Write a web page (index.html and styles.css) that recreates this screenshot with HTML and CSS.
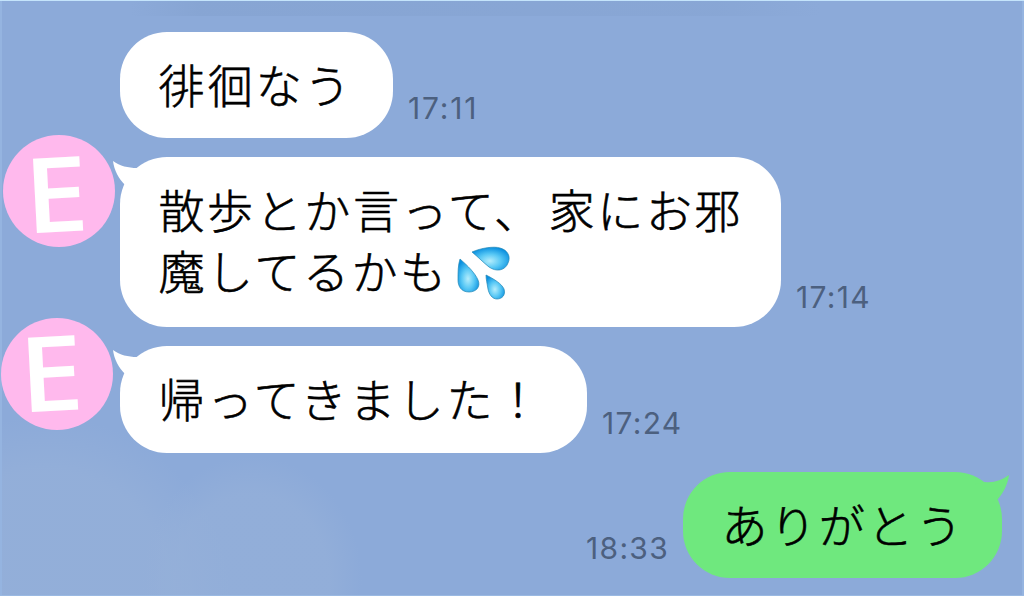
FILE: index.html
```html
<!DOCTYPE html>
<html lang="ja">
<head>
<meta charset="UTF-8">
<meta name="viewport" content="width=device-width, initial-scale=1.0">
<title>トーク</title>
<link rel="stylesheet" href="styles.css">
</head>
<body>
<div class="chat">
  <div class="row">
    <div class="avatar-col"></div>
    <div class="bubble">徘徊なう</div>
    <span class="time narrow">17:11</span>
  </div>

  <div class="row">
    <div class="avatar-col"><div class="avatar"><span>E</span></div></div>
    <div class="bubble long">
      <svg class="tail" width="34" height="32" viewBox="0 0 34 32"><path d="M0 3C7 8 15 10 24 10L34 12L20 32L12 27C6 21 1 12 0 3Z" fill="#fff"/></svg>
      散歩とか言って<span class="comma">、</span>家にお邪<br>魔してるかも<svg class="sweat" width="56" height="54" viewBox="0 0 56 54">
        <defs>
          <radialGradient id="drop" cx="48%" cy="60%" r="60%">
            <stop offset="0" stop-color="#b4edfc"/>
            <stop offset=".5" stop-color="#58c8f5"/>
            <stop offset="1" stop-color="#098fdf"/>
          </radialGradient>
        </defs>
        <g fill="url(#drop)" stroke="#2187b5" stroke-width=".7">
          <path d="M16 6C25 2 38 0 44 2C52 4 55 11 52 17C49 25 40 26 33 21C28 17 22 11 16 6Z"/>
          <path d="M4 13C12 20 19 27 22 34C25 41 20 46 13 46C5 46 2 40 2 34C2 26 2 19 4 13Z"/>
          <path d="M30 29C38 33 46 38 48 43C50 49 46 53 41 53C36 53 33 48 32 43C31 37 30 33 30 29Z"/>
        </g>
      </svg>
    </div>
    <span class="time">17:14</span>
  </div>

  <div class="row">
    <div class="avatar-col"><div class="avatar second"><span>E</span></div></div>
    <div class="bubble medium">
      <svg class="tail" width="34" height="32" viewBox="0 0 34 32"><path d="M0 3C7 8 15 10 24 10L34 12L20 32L12 27C6 21 1 12 0 3Z" fill="#fff"/></svg>
      帰ってきました！
    </div>
    <span class="time">17:24</span>
  </div>

  <div class="row mine">
    <span class="time">18:33</span>
    <div class="bubble">
      <svg class="tail" width="34" height="32" viewBox="0 0 34 32"><path d="M34 3C27 8 19 11 10 10L0 12L14 32L23 27C29 20 33 11 34 3Z" fill="#6fe87e"/></svg>
      ありがとう
    </div>
  </div>
</div>
</body>
</html>
```
FILE: styles.css
```css
* {
  box-sizing: border-box;
}

body {
  margin: 0;
  overflow: hidden;
}

.chat {
  height: 596px;
  padding-top: 31px;
  display: flex;
  flex-direction: column;
  gap: 19px;
  border-top: 1px solid #c4e4fb;
  border-bottom: 1px solid #9ab9e2;
  background:
    linear-gradient(#95b4e0, #95b4e0) left / 2px 100% no-repeat,
    linear-gradient(#95b4e0, #95b4e0) right / 2px 100% no-repeat,
    linear-gradient(90deg, rgba(133, 163, 209, 0), rgba(133, 163, 209, .7) 10%, rgba(133, 163, 209, .5) 85%, rgba(133, 163, 209, 0)) 130px 0 / 690px 15px no-repeat,
    radial-gradient(ellipse 110px 125px at 252px 580px, rgba(149, 176, 217, .65) 70%, rgba(149, 176, 217, 0)),
    radial-gradient(ellipse 185px 185px at 45px 600px, rgba(149, 176, 217, .75) 70%, rgba(149, 176, 217, 0)),
    #8caad9;
}

.row {
  display: flex;
  align-items: flex-end;
}

.avatar-col {
  width: 120px;
  align-self: flex-start;
}

.avatar {
  width: 112px;
  height: 112px;
  margin: -22px 0 -90px 3px;
  border-radius: 50%;
  background: #ffb9ed;
  display: flex;
  align-items: center;
  justify-content: center;
}

.avatar.second {
  margin: -28px 0 -84px 1px;
}

.avatar span {
  font: 600 104px/112px "Open Sans", sans-serif;
  color: #fff;
  transform: translate(-3px, 1px) rotate(-3deg) scaleX(1.1);
}

.avatar.second span {
  transform: translate(-6px, -3px) rotate(-3deg) scaleX(1.1);
}

.bubble {
  position: relative;
  width: 273px;
  height: 106.3px;
  padding: 21px 0 0 38.5px;
  border-radius: 47px;
  background: #fff;
  color: #000;
  font-family: "Noto Sans CJK JP", sans-serif;
  font-weight: 300;
  font-size: 46px;
  line-height: 61px;
  letter-spacing: 2.6px;
  white-space: nowrap;
  -webkit-text-stroke: .6px #000;
}

.long {
  width: 661px;
  height: 170px;
}

.comma {
  margin-right: 6px;
}

.medium {
  width: 467px;
}

.tail {
  position: absolute;
  left: -7px;
  top: 1px;
}

.sweat {
  vertical-align: -11px;
  margin-left: 7px;
}

.time {
  margin: 0 0 12px 15px;
  font-family: "Inter", sans-serif;
  font-size: 30px;
  line-height: 36px;
  letter-spacing: 1.3px;
  color: #4c607f;
}

.narrow {
  letter-spacing: 1.8px;
}

.mine {
  justify-content: flex-end;
  padding-right: 22px;
}

.mine .bubble {
  width: 319px;
  background: #6fe87e;
}

.mine .tail {
  left: auto;
  right: -7px;
  top: 0;
}

.mine .time {
  margin: 0 14px 12px 0;
}
```
